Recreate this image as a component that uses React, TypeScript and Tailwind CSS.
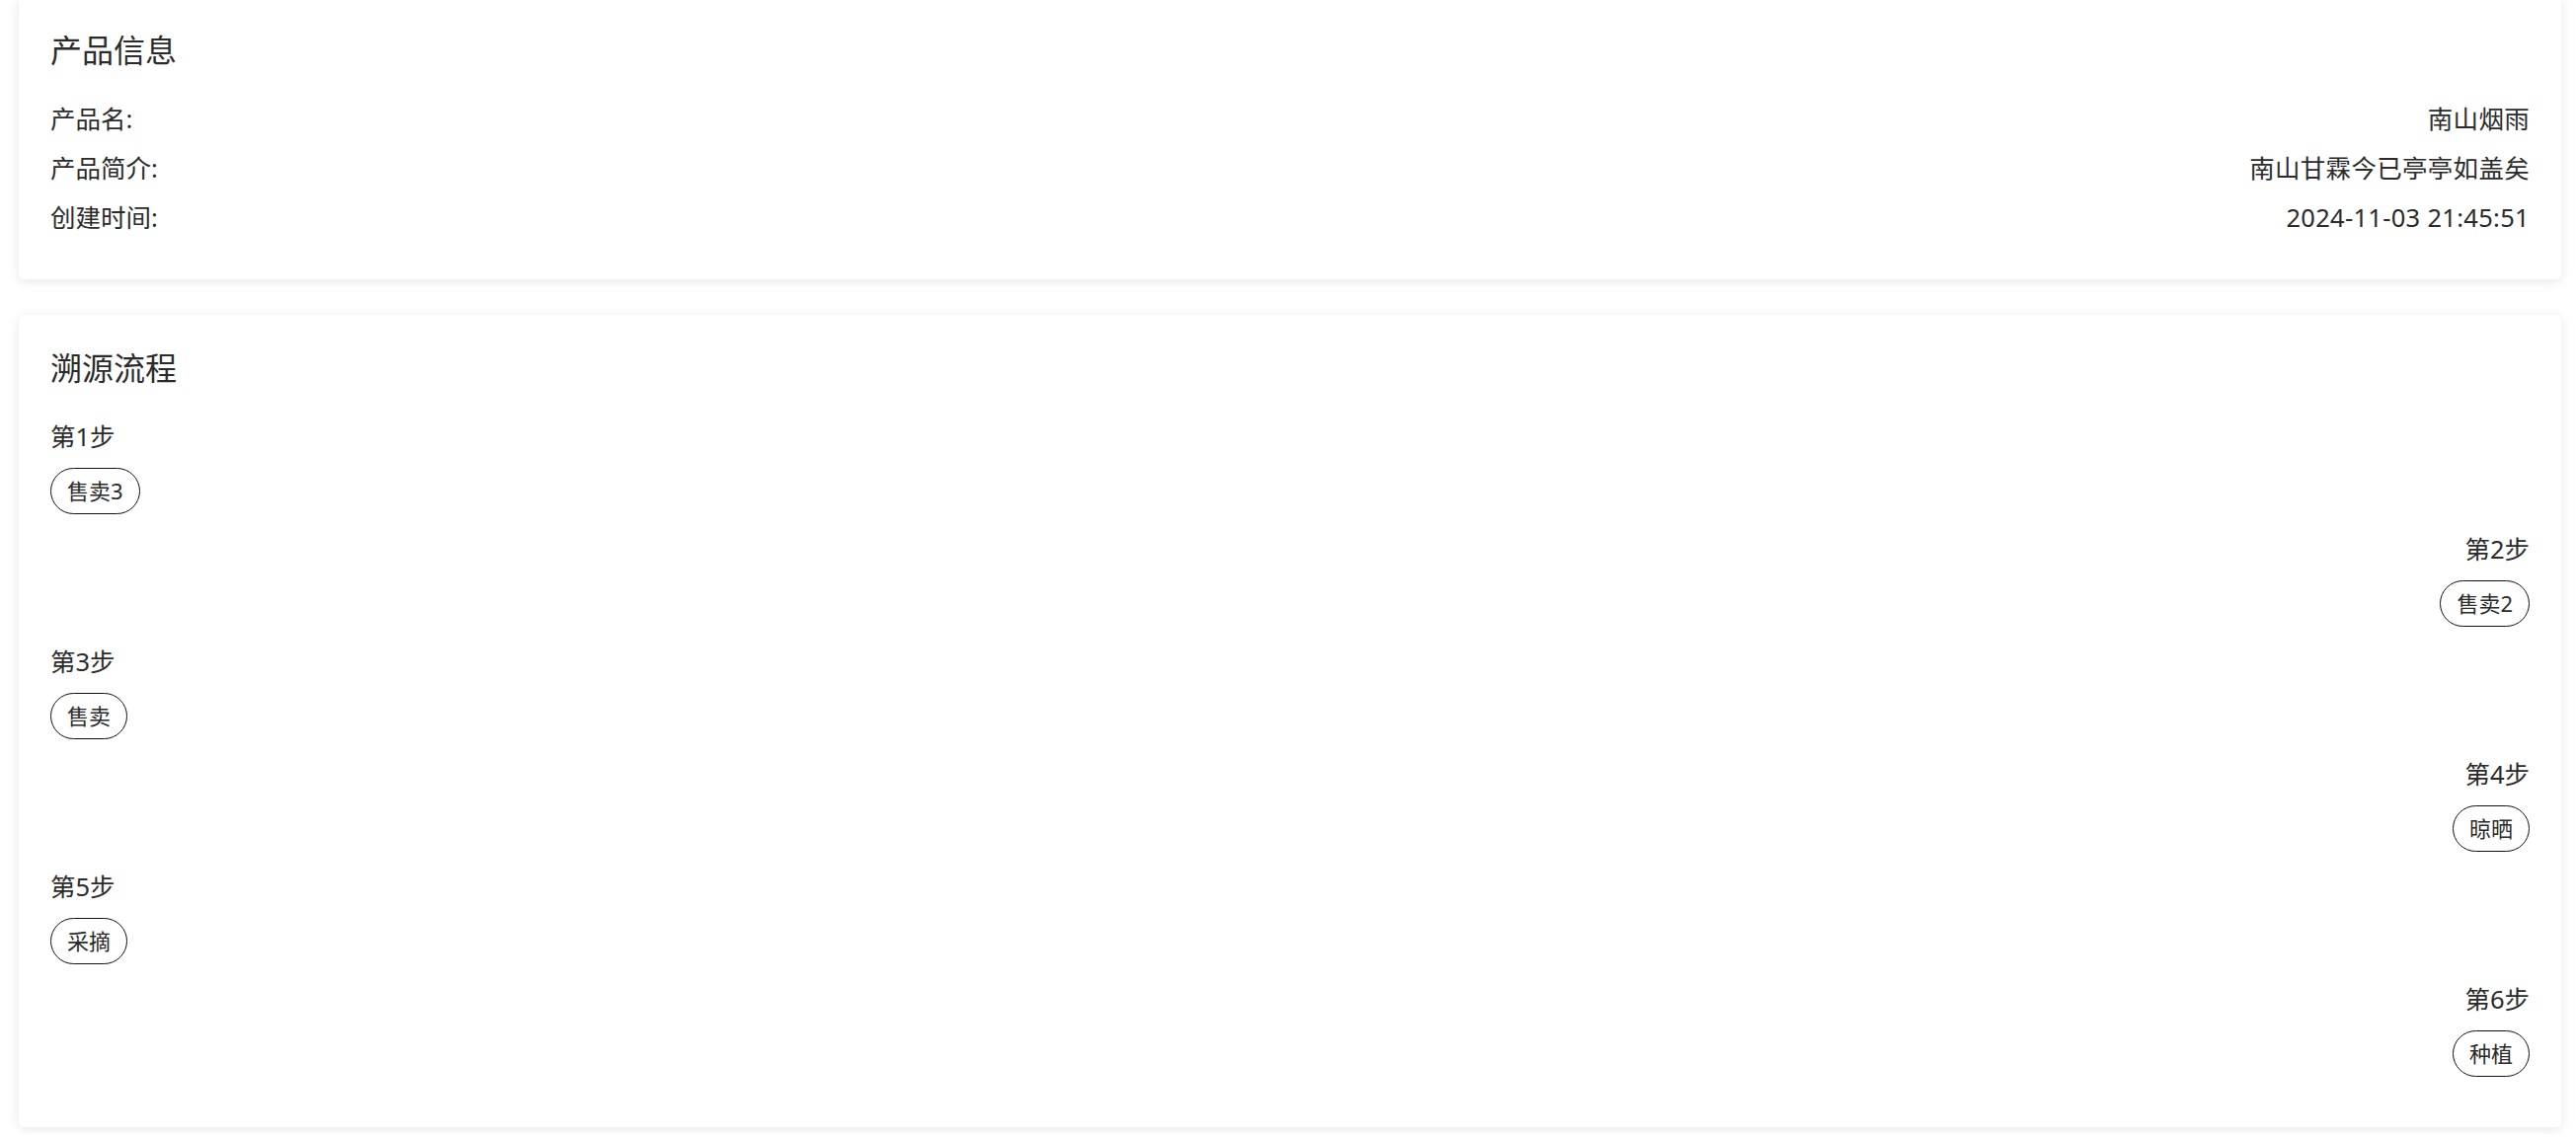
const PRODUCT = [
  { label: '产品名:', value: '南山烟雨' },
  { label: '产品简介:', value: '南山甘霖今已亭亭如盖矣' },
  { label: '创建时间:', value: '2024-11-03 21:45:51' },
];

const STEPS = ['售卖3', '售卖2', '售卖', '晾晒', '采摘', '种植'];

const FONT = "font-['Noto_Sans','Noto_Sans_CJK_SC',sans-serif]";

function Card({ title, children, className = '' }: { title: string; children: React.ReactNode; className?: string }) {
  return (
    <div className={`bg-white rounded-[5px] shadow-[0_2px_12px_0_rgba(0,0,0,0.1)] px-[32px] pt-[30px] ${className}`}>
      <div className="text-[32px] leading-[48px] text-[#2b2b2b]">{title}</div>
      {children}
    </div>
  );
}

export default function App() {
  return (
    <div className={`${FONT} bg-white min-h-screen pl-[19px] pr-[15px] text-[#2b2b2b]`}>
      {/* 产品信息 */}
      <Card title="产品信息" className="-mt-[3px] pb-[38px]">
        <div className="mt-[20px]">
          {PRODUCT.map((row) => (
            <div key={row.label} className="flex justify-between text-[25.5px] leading-[50px]">
              <span>{row.label}</span>
              <span className="tracking-[0.3px]">{row.value}</span>
            </div>
          ))}
        </div>
      </Card>

      {/* 溯源流程 */}
      <Card title="溯源流程" className="mt-[36px] pb-[34px]">
        <div className="mt-[27px] flex flex-col">
          {STEPS.map((name, i) => {
            const right = i % 2 === 1;
            return (
              <div key={i} className={`flex flex-col pb-[17px] ${right ? 'items-end' : 'items-start'}`}>
                <div className="text-[25.5px] leading-[36px]">第{i + 1}步</div>
                <div className="mt-[14px] h-[47px] flex items-center px-[16px] rounded-full border border-[#111] text-[22px] text-[#2b2b2b]">
                  {name}
                </div>
              </div>
            );
          })}
        </div>
      </Card>
    </div>
  );
}
